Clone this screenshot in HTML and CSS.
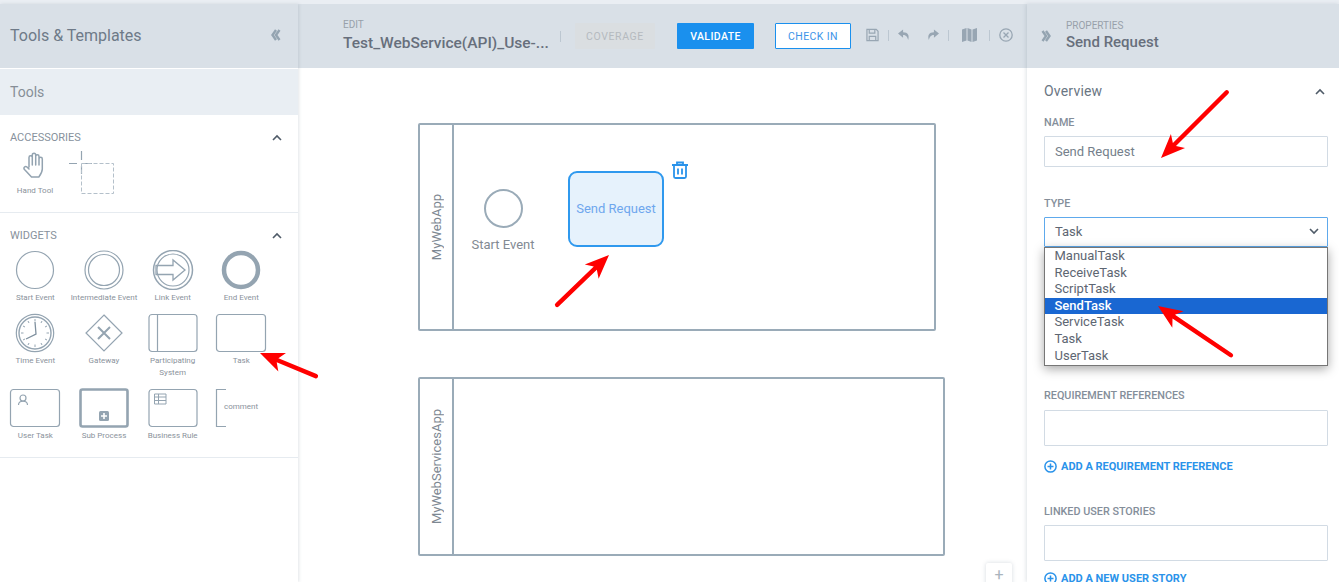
FILE: index.html
```html
<!DOCTYPE html>
<html lang="en">
<head>
<meta charset="utf-8">
<title>Tools &amp; Templates</title>
<link rel="stylesheet" href="styles.css">
</head>
<body>
<div class="topstrip"></div>
<div class="main">
  <aside class="left">
    <header class="left-head">
      <h1>Tools &amp; Templates</h1>
      <svg class="chev" width="10" height="12" viewBox="0 0 10 12"><path d="M5 1 1.500 6 5 11M8.500 1 5 6l3.500 5" fill="none" stroke="#94a4b1" stroke-width="2.400"/></svg>
    </header>
    <div class="tools-band">Tools</div>
    <section class="tool-section acc">
      <div class="sec-title"><span>ACCESSORIES</span><svg width="12" height="8" viewBox="0 0 12 8"><path d="M2 6l4-4 4 4" fill="none" stroke="#4f5b68" stroke-width="1.600"/></svg></div>
      <div class="acc-row">
        <div class="tool hand">
          <svg width="24" height="26" viewBox="0 0 24 26"><path d="M6 15V5.500c0-2.200 3.300-2.200 3.300 0V3c0-2.400 3.400-2.400 3.400 0v1.500c0-2.200 3.300-2.200 3.300 0V7c0-2.200 3.300-2.200 3.300 0v10c0 3.500-2 6-3.500 8H8.500L1.500 17.500c-1.500-2 .8-4 2.500-2.500L6 17M9.300 5v8M12.700 4v9M16 5v8" fill="none" stroke="#93a3b0" stroke-width="1.500" stroke-linejoin="round" stroke-linecap="round"/></svg>
          <span class="lbl">Hand Tool</span>
        </div>
        <svg class="marquee" width="46" height="44" viewBox="0 0 46 44"><path d="M12.500 0v9M12.500 15v8M0 12.500h8M16 12.500h7" stroke="#94a4b1" stroke-width="1.200" fill="none"/><rect x="12.500" y="12.500" width="32" height="30" fill="none" stroke="#b4c0ca" stroke-width="1" stroke-dasharray="4 2"/></svg>
      </div>
    </section>
    <section class="tool-section wid">
      <div class="sec-title"><span>WIDGETS</span><svg width="12" height="8" viewBox="0 0 12 8"><path d="M2 6l4-4 4 4" fill="none" stroke="#4f5b68" stroke-width="1.600"/></svg></div>
      <div class="widget-grid">
        <div class="tool"><svg class="ico" viewBox="0 0 52 40"><circle cx="26" cy="20" r="18.500"/></svg><span class="lbl">Start Event</span></div>
        <div class="tool"><svg class="ico" viewBox="0 0 52 40"><circle cx="26" cy="20" r="19"/><circle cx="26" cy="20" r="15.500"/></svg><span class="lbl">Intermediate Event</span></div>
        <div class="tool"><svg class="ico" viewBox="0 0 52 40"><circle cx="26" cy="20" r="19.500" stroke-width="1.500"/><circle cx="26" cy="20" r="16"/><path d="M9 15.500h17V10l12 10-12 10v-5.500H9z" stroke-width="1.300"/></svg><span class="lbl">Link Event</span></div>
        <div class="tool"><svg class="ico" viewBox="0 0 52 40"><circle cx="26" cy="20" r="17" stroke-width="4.500"/></svg><span class="lbl">End Event</span></div>

        <div class="tool"><svg class="ico" viewBox="0 0 52 40"><circle cx="26" cy="20" r="18.700"/><circle cx="26" cy="20" r="16" stroke-width="1.400"/><path d="M26 6v2.500M26 31.500V34M12 20h2.500M37.500 20H40M19 8l1 2M33 8l-1 2M14 13l2 1M38 13l-2 1M14 27l2-1M38 27l-2-1M19 32l1-2M33 32l-1-2" stroke-width="1"/><path d="M26 9l1 12-10 5" stroke="#7f909e" stroke-width="1.300"/></svg><span class="lbl">Time Event</span></div>
        <div class="tool"><svg class="ico" viewBox="0 0 52 40"><path d="M26 2l18 18-18 18L8 20z"/><path d="M20 14l12 12M32 14L20 26" stroke-width="2"/></svg><span class="lbl">Gateway</span></div>
        <div class="tool"><svg class="ico" viewBox="0 0 52 40"><rect x="2" y="1.500" width="48" height="37" rx="3"/><path d="M10.500 1.500v37"/></svg><span class="lbl">Participating<br>System</span></div>
        <div class="tool"><svg class="ico" viewBox="0 0 52 40"><rect x="1.500" y="1.500" width="49" height="37" rx="3"/></svg><span class="lbl">Task</span></div>

        <div class="tool"><svg class="ico" viewBox="0 0 52 40"><rect x="1.500" y="1.500" width="49" height="37" rx="3"/><circle cx="14" cy="10" r="3"/><path d="M9.500 17c0-5 9-5 9 0"/></svg><span class="lbl">User Task</span></div>
        <div class="tool"><svg class="ico" viewBox="0 0 52 40"><rect x="2.500" y="1.500" width="47" height="37" rx="2" stroke-width="2.600"/><rect x="21" y="23" width="10" height="10" rx="1.500" class="solid"/><path d="M23 28h6M26 25v6" stroke="#fff" stroke-width="1.600"/></svg><span class="lbl">Sub Process</span></div>
        <div class="tool"><svg class="ico" viewBox="0 0 52 40"><rect x="2" y="1.500" width="48" height="37" rx="3"/><path d="M7.500 6h11.500v10H7.500zM7.500 9h11.500M7.500 12.500h11.500M11.500 6v10" stroke-width="1"/></svg><span class="lbl">Business Rule</span></div>
        <div class="tool"><svg class="ico" viewBox="0 0 52 40"><path d="M11 1.500H1.500v37H11"/><text x="26" y="21" class="cmt" text-anchor="middle">comment</text></svg></div>
      </div>
    </section>
  </aside>

  <main class="center">
    <header class="center-head">
      <div class="title-block">
        <div class="eyebrow">EDIT</div>
        <div class="doc-title">Test_WebService(API)_Use-...</div>
      </div>
      <span class="sep sep-a"></span>
      <button class="btn coverage">COVERAGE</button>
      <button class="btn validate">VALIDATE</button>
      <button class="btn checkin">CHECK IN</button>
      <div class="actions">
        <svg width="13" height="14" viewBox="0 0 14 14"><path d="M1 1h10l2 2v10H1zM3.500 1.500v3.500h6V1.500M3.500 12.500V8.500h7v4" fill="none" stroke="#98a6b3" stroke-width="1.300"/></svg>
        <span class="sep"></span>
        <svg width="12" height="12" viewBox="0 0 13 12"><path d="M5.500 0 0 4.500 5.500 9V6c3 0 4.500 1.500 5.500 5.500C12.500 6.500 11 3 5.500 3z" fill="#98a6b3"/></svg>
        <svg class="redo" width="12" height="12" viewBox="0 0 13 12"><path d="M7.500 0 13 4.500 7.500 9V6c-3 0-4.500 1.500-5.500 5.500C.5 6.500 2 3 7.500 3z" fill="#98a6b3"/></svg>
        <span class="sep"></span>
        <svg class="map" width="15" height="14" viewBox="0 0 15 14"><path d="M0 1.500 4.500 0v12.500L0 14zM5.500 0 9.500 1.500V14L5.500 12.500zM10.500 1.500 15 0v12.500L10.500 14z" fill="#98a6b3"/></svg>
        <span class="sep"></span>
        <svg width="14" height="14" viewBox="0 0 14 14"><circle cx="7" cy="7" r="6.200" fill="none" stroke="#98a6b3" stroke-width="1.300"/><path d="M4.500 4.500l5 5M9.500 4.500l-5 5" stroke="#98a6b3" stroke-width="1.300"/></svg>
      </div>
    </header>
    <div class="canvas">
      <div class="pool pool-a">
        <div class="lane-name"><span>MyWebApp</span></div>
        <div class="lane">
          <div class="node-start"><span class="circle"></span><span class="node-lbl">Start Event</span></div>
          <div class="node-task">Send Request</div>
          <svg class="trash" width="18" height="18" viewBox="0 0 18 18"><path d="M1 4h16M6 4V1.500h6V4M3 4v11.500c0 1 .6 1.500 1.500 1.500h9c.9 0 1.500-.5 1.500-1.500V4M7 7.500v6M11 7.500v6" fill="none" stroke="#2a93ea" stroke-width="1.800"/></svg>
        </div>
      </div>
      <div class="pool pool-b">
        <div class="lane-name"><span>MyWebServicesApp</span></div>
        <div class="lane"></div>
      </div>
      <div class="zoom-plus">+</div>
    </div>
  </main>

  <aside class="right">
    <header class="right-head">
      <svg width="10" height="12" viewBox="0 0 10 12"><path d="M1.500 1 5 6l-3.500 5M5 1l3.500 5L5 11" fill="none" stroke="#94a4b1" stroke-width="2.400"/></svg>
      <div>
        <div class="eyebrow">PROPERTIES</div>
        <div class="prop-title">Send Request</div>
      </div>
    </header>
    <div class="props">
      <div class="ov-row"><span>Overview</span><svg width="12" height="8" viewBox="0 0 12 8"><path d="M2 6l4-4 4 4" fill="none" stroke="#4f5b68" stroke-width="1.600"/></svg></div>
      <label class="f-label l-name">NAME</label>
      <div class="input name-input">Send Request</div>
      <label class="f-label l-type">TYPE</label>
      <div class="select-wrap">
        <div class="input select">Task<svg width="12" height="8" viewBox="0 0 12 8"><path d="M2 2l4 4 4-4" fill="none" stroke="#4f5b68" stroke-width="1.600"/></svg></div>
        <ul class="dropdown">
          <li>ManualTask</li>
          <li>ReceiveTask</li>
          <li>ScriptTask</li>
          <li class="sel">SendTask</li>
          <li>ServiceTask</li>
          <li>Task</li>
          <li>UserTask</li>
        </ul>
      </div>
      <label class="f-label l-req">REQUIREMENT REFERENCES</label>
      <div class="input tall"></div>
      <a class="add add-req"><svg width="13" height="13" viewBox="0 0 13 13"><circle cx="6.500" cy="6.500" r="5.600" fill="none" stroke="#2a93ea" stroke-width="1.500"/><path d="M3.500 6.500h6M6.500 3.500v6" stroke="#2a93ea" stroke-width="1.500"/></svg>ADD A REQUIREMENT REFERENCE</a>
      <label class="f-label l-link">LINKED USER STORIES</label>
      <div class="input tall"></div>
      <a class="add add-story"><svg width="13" height="13" viewBox="0 0 13 13"><circle cx="6.500" cy="6.500" r="5.600" fill="none" stroke="#2a93ea" stroke-width="1.500"/><path d="M3.500 6.500h6M6.500 3.500v6" stroke="#2a93ea" stroke-width="1.500"/></svg>ADD A NEW USER STORY</a>
    </div>
  </aside>
</div>

<svg class="arrows" width="1339" height="582" viewBox="0 0 1339 582">
  <g transform="translate(260 353) rotate(22.500) rotate(180)"><path d="M0 0-24-10-19-2.200H-60.500a2.200 2.200 0 0 0 0 4.400H-19L-24 10z" fill="#f00"/></g>
  <g transform="translate(609 255) rotate(-43.900)"><path d="M0 0-24-10-19-2.200H-72a2.200 2.200 0 0 0 0 4.400H-19L-24 10z" fill="#f00"/></g>
  <g transform="translate(1161 158) rotate(135)"><path d="M0 0-24-10-19-2.200H-93a2.200 2.200 0 0 0 0 4.400H-19L-24 10z" fill="#f00"/></g>
  <g transform="translate(1158 306) rotate(214)"><path d="M0 0-24-10-19-2.200H-88a2.200 2.200 0 0 0 0 4.400H-19L-24 10z" fill="#f00"/></g>
</svg>
</body>
</html>
```
FILE: styles.css
```css
* { box-sizing: border-box; }
html, body { margin: 0; height: 582px; overflow: hidden; }
body { font-family: Roboto, "Liberation Sans", sans-serif; background: #fff; color: #6b7785; position: relative; }

.topstrip { height: 4px; background: #eaeef3; }
.main { display: flex; height: 578px; }

/* Left panel */
.left { width: 298px; flex: none; background: #fff; position: relative; z-index: 2; box-shadow: 1px 0 3px rgba(90,110,130,.18); }
.left-head { height: 64px; background: #d9e0e7; display: flex; align-items: center; justify-content: space-between; padding: 0 17px 2px 10px; }
.left-head h1 { margin: 0; font-size: 16px; font-weight: 400; color: #6e7a88; }
.tools-band { margin-top: 1px; height: 46px; background: #e9eef3; padding-left: 10px; font-size: 14px; line-height: 46px; color: #868e97; }
.tool-section { border-bottom: 1px solid #e6ebf0; }
.acc { height: 98px; padding-top: 16px; }
.wid { height: 245px; padding-top: 16px; }
.sec-title { display: flex; justify-content: space-between; align-items: center; padding: 0 15px 0 10px; font-size: 11px; line-height: 14px; color: #87919c; }
.acc-row { display: flex; align-items: flex-start; margin-top: 7px; }
.hand { width: 50px; margin-left: 10px; }
.hand .lbl { margin-top: 7px; }
.marquee { margin: -1px 0 0 9px; }
.tool { display: flex; flex-direction: column; align-items: center; }
.lbl { font-size: 8px; line-height: 12px; color: #8a929b; text-align: center; white-space: nowrap; }
.widget-grid { display: grid; grid-template-columns: repeat(4, 68.670px); row-gap: 9px; padding-left: 1px; margin-top: 7px; align-items: start; }
.ico { width: 52px; height: 40px; margin-bottom: 2px; fill: none; stroke: #94a4b1; stroke-width: 1.200; display: block; }
.ico .solid { fill: #94a4b1; stroke: none; }
.ico .cmt { fill: #8a929b; stroke: none; font-size: 8px; font-family: Roboto, sans-serif; }

/* Center */
.center { flex: 1; min-width: 0; display: flex; flex-direction: column; }
.center-head { height: 64px; background: #d9e0e7; display: flex; align-items: center; padding: 0 14px 0 45px; flex: none; }
.title-block { width: 217px; flex: none; }
.eyebrow { font-size: 10px; line-height: 12px; color: #98a0aa; }
.doc-title { font-size: 15.500px; font-weight: 500; line-height: 20px; margin-top: 2px; color: #676f7c; white-space: nowrap; }
.sep { display: inline-block; width: 1px; height: 11px; background: #bcc7d1; flex: none; }
.sep-a { margin-right: 14px; }
.btn { height: 26px; font-family: inherit; font-size: 10.500px; letter-spacing: .6px; border-radius: 1px; border: 1px solid transparent; padding: 0; flex: none; }
.coverage { width: 80px; background: #dadee1; color: #b5babf; border-color: #dadee1; margin-right: 22px; }
.validate { width: 77px; background: #1a90ee; color: #fff; font-weight: 500; letter-spacing: .4px; margin-right: 21px; }
.checkin { width: 76px; background: #fff; color: #3d94e8; border-color: #1a90ee; letter-spacing: .4px; }
.actions { display: flex; align-items: center; margin-left: 15px; gap: 9px; margin-top: -2px; }
.actions .redo { margin-left: 8px; }
.actions .map { margin: 0 3px 0 4px; }

.canvas { flex: 1; position: relative; padding: 55px 0 0 120px; background: #fff; }
.pool { display: flex; border: 2px solid #9aabb8; border-radius: 2px; background: #fff; }
.pool-a { width: 518px; height: 208px; margin-bottom: 46px; }
.pool-b { width: 527px; height: 179px; }
.lane-name { width: 34px; flex: none; border-right: 2px solid #9aabb8; display: flex; align-items: center; justify-content: center; }
.lane-name span { writing-mode: vertical-rl; transform: rotate(180deg); font-size: 13px; color: #7e8892; white-space: nowrap; }
.lane { flex: 1; position: relative; }
.node-start { position: absolute; left: 0; top: 64px; width: 98px; display: flex; flex-direction: column; align-items: center; gap: 9px; }
.circle { width: 39px; height: 39px; border-radius: 50%; border: 2px solid #9aabb8; flex: none; }
.node-lbl { font-size: 13px; line-height: 15px; color: #828a93; white-space: nowrap; }
.node-task { position: absolute; left: 114px; top: 46px; width: 96px; height: 76px; border: 2px solid #2f99ee; border-radius: 9px; background: #e6f2fc; display: flex; align-items: center; justify-content: center; padding-bottom: 2px; font-size: 13px; color: #6ea7ee; white-space: nowrap; }
.trash { position: absolute; left: 217px; top: 36px; }
.zoom-plus { position: absolute; left: 688px; top: 495px; width: 26px; height: 26px; background: #fff; border-radius: 2px; box-shadow: 0 0 4px rgba(90,110,130,.25); color: #aab4bd; font-size: 16px; line-height: 24px; text-align: center; }

/* Right panel */
.right { width: 312px; flex: none; background: #fff; position: relative; z-index: 2; box-shadow: -1px 0 4px rgba(90,110,130,.2); }
.right-head { height: 64px; background: #d9e0e7; display: flex; align-items: center; gap: 15px; padding: 0 0 0 14px; }
.prop-title { font-size: 15px; font-weight: 500; line-height: 20px; margin-top: 0; color: #676f7c; }
.props { padding: 0 11px 0 17px; }
.ov-row { display: flex; justify-content: space-between; align-items: center; margin-top: 15px; font-size: 14px; line-height: 17px; letter-spacing: .2px; color: #6a7683; padding-right: 2px; }
.f-label { display: block; font-size: 10.800px; font-weight: 500; line-height: 13px; color: #848e9a; }
.l-name { margin-top: 16px; }
.l-type { margin-top: 30px; }
.l-req { margin-top: 142px; }
.l-link { margin-top: 32px; }
.input { border: 1px solid #d2dbe4; border-radius: 1px; background: #fff; height: 31px; margin-top: 7px; padding-left: 10px; font-size: 13px; line-height: 29px; color: #757f8b; }
.tall { height: 36px; margin-top: 8px; }
.l-link + .tall { margin-top: 7px; }
.select-wrap { position: relative; }
.select { height: 30px; border-color: #5ea9ec; color: #5d6672; font-size: 13px; display: flex; justify-content: space-between; align-items: center; padding: 0 7px 2px 10px; margin-top: 7px; }
.dropdown { position: absolute; left: 0; right: 0; top: 30px; margin: 0; padding: 0; list-style: none; height: 119px; background: #fff; border: 1px solid #767676; box-shadow: 0 3px 10px rgba(0,0,0,.35); z-index: 3; }
.dropdown li { height: 16.620px; line-height: 16.620px; padding-left: 9.500px; font-size: 13px; color: #5d6672; }
.dropdown .sel { background: #1967d2; color: #fff; font-weight: 500; }
.add { display: flex; align-items: center; gap: 4px; margin-top: 14px; font-size: 11px; font-weight: 700; line-height: 13px; color: #2a93ea; white-space: nowrap; }
.add-story { margin-top: 11px; }

.arrows { position: absolute; left: 0; top: 0; z-index: 5; pointer-events: none; }
```
